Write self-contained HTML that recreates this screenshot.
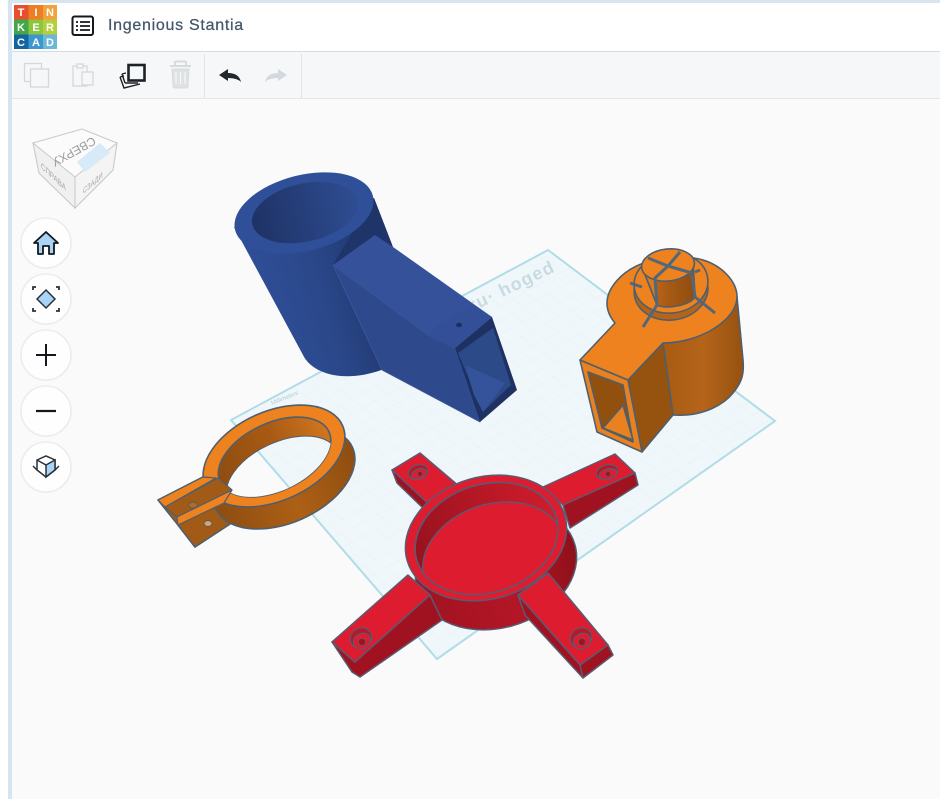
<!DOCTYPE html>
<html><head><meta charset="utf-8">
<style>
html,body{margin:0;padding:0;background:#fafafa}
#w{position:relative;width:940px;height:799px;overflow:hidden;background:#fafafa;font-family:"Liberation Sans",sans-serif}
svg{position:absolute;left:0;top:0}
#t{position:absolute;left:108px;top:17px;font-size:16px;letter-spacing:.72px;color:#44566a;white-space:nowrap;-webkit-text-stroke:.25px #44566a}
</style></head><body><div id="w">
<svg width="940" height="799" viewBox="0 0 940 799" xmlns="http://www.w3.org/2000/svg" font-family="Liberation Sans, sans-serif">
<defs>
<linearGradient id="bb" gradientUnits="userSpaceOnUse" x1="240" x2="385" y1="300" y2="260"><stop offset="0" stop-color="#31509b"/><stop offset=".55" stop-color="#2a4789"/><stop offset="1" stop-color="#1f3468"/></linearGradient>
<linearGradient id="bi" x1="0" x2="1" y1="0" y2="0"><stop offset="0" stop-color="#1e3265"/><stop offset="1" stop-color="#2f4d92"/></linearGradient>
<linearGradient id="ob" x1="0" x2="1" y1="0" y2="0"><stop offset="0" stop-color="#a85b12"/><stop offset=".5" stop-color="#b5641a"/><stop offset="1" stop-color="#96520f"/></linearGradient>
<linearGradient id="oc" x1="0" x2="1" y1="0" y2="0"><stop offset="0" stop-color="#c96f18"/><stop offset=".5" stop-color="#a85a14"/><stop offset="1" stop-color="#8e4d10"/></linearGradient>
<linearGradient id="oi" x1="0" x2="1" y1="0" y2="0"><stop offset="0" stop-color="#8e4d10"/><stop offset=".55" stop-color="#a85a14"/><stop offset="1" stop-color="#d0761f"/></linearGradient>
<linearGradient id="rs" x1="0" x2="1" y1="0" y2="0"><stop offset="0" stop-color="#8e4d10"/><stop offset=".5" stop-color="#ad6016"/><stop offset="1" stop-color="#8e4d10"/></linearGradient>
<linearGradient id="rb" x1="0" x2="1" y1="0" y2="0"><stop offset="0" stop-color="#a01320"/><stop offset=".55" stop-color="#b41626"/><stop offset="1" stop-color="#8e1019"/></linearGradient>
<linearGradient id="ri" x1="0" x2="1" y1="0" y2="0"><stop offset="0" stop-color="#98121e"/><stop offset="1" stop-color="#cf1c2c"/></linearGradient>
<pattern id="g" width="14" height="14" patternUnits="userSpaceOnUse" patternTransform="matrix(.88 -.47 .8 .6 231 420)"><path d="M0 0H14M0 0V14" stroke="#e2edf1" stroke-width=".6" fill="none"/></pattern>
<clipPath id="ci"><ellipse cx="274.5" cy="457" rx="60" ry="34" transform="rotate(-25 274.5 457)"/></clipPath>
<clipPath id="cf"><ellipse cx="486.5" cy="538.5" rx="73" ry="54" transform="rotate(-18 486.5 538.5)"/></clipPath>
<mask id="mh" maskUnits="userSpaceOnUse" x="0" y="0" width="940" height="799"><rect width="940" height="799" fill="#fff"/><g clip-path="url(#ci)"><ellipse cx="282.5" cy="476" rx="60" ry="34" transform="rotate(-25 282.5 476)" fill="#000"/></g></mask>
</defs>

<!-- chrome -->
<rect width="940" height="799" fill="#fafafa"/>
<rect x="0" y="0" width="8" height="799" fill="#fff"/>
<rect x="8" y="0" width="932" height="3" fill="#d9e5ee"/>
<rect x="8" y="0" width="4" height="799" fill="#d6e4f0"/>
<rect x="12" y="3" width="928" height="48" fill="#fff"/>
<rect x="12" y="51" width="928" height="1" fill="#d8dadc"/>
<rect x="12" y="52" width="928" height="46" fill="#f6f7f8"/>
<rect x="12" y="98" width="928" height="1" fill="#e4e5e7"/>
<rect x="204" y="54" width="1" height="44" fill="#e1e3e5"/>
<rect x="301" y="54" width="1" height="44" fill="#e1e3e5"/>

<!-- logo -->
<g font-size="11" font-weight="bold" fill="#fff" text-anchor="middle">
<rect x="14" y="5" width="14.5" height="14.5" fill="#e8502d"/><text x="21" y="16">T</text>
<rect x="28.5" y="5" width="14.5" height="14.5" fill="#ef7d23"/><text x="36" y="16">I</text>
<rect x="43" y="5" width="14" height="14.5" fill="#f2a23a"/><text x="50" y="16">N</text>
<rect x="14" y="19.5" width="14.5" height="15" fill="#43a648"/><text x="21" y="31">K</text>
<rect x="28.5" y="19.5" width="14.5" height="15" fill="#8cc63f"/><text x="36" y="31">E</text>
<rect x="43" y="19.5" width="14" height="15" fill="#b3cf3c"/><text x="50" y="31">R</text>
<rect x="14" y="34.5" width="14.5" height="14.5" fill="#14659f"/><text x="21" y="46">C</text>
<rect x="28.5" y="34.5" width="14.5" height="14.5" fill="#3c97cf"/><text x="36" y="46">A</text>
<rect x="43" y="34.5" width="14" height="14.5" fill="#6db7d6"/><text x="50" y="46">D</text>
</g>
<!-- list icon -->
<rect x="72.5" y="16.5" width="20.5" height="18.5" rx="2" fill="#fff" stroke="#15191d" stroke-width="2"/>
<path d="M76 22h2M80 22h10M76 26h2M80 26h10M76 30h2M80 30h10" stroke="#15191d" stroke-width="1.8"/>

<!-- toolbar icons -->
<g fill="none" stroke="#d5d8db" stroke-width="1.3">
<rect x="24.5" y="63.5" width="17" height="18"/><rect x="30.5" y="69" width="18" height="18" fill="#f6f7f8"/>
<rect x="73" y="66" width="14" height="20"/><rect x="77" y="64" width="6" height="4" fill="#f6f7f8"/><rect x="82" y="72" width="11" height="13" fill="#f6f7f8"/>
</g>
<path d="M170 66h21M175 65v-2.500q0-1 1-1h9q1 0 1 1v2.500" fill="none" stroke="#d8dbde" stroke-width="2"/>
<path d="M172 69h17l-1 17q0 2-2 2h-11q-2 0-2-2z" fill="#dfe2e5" stroke="#d8dbde" stroke-width="1"/>
<path d="M176 72v12M180.500 72v12M185 72v12" stroke="#f6f7f8" stroke-width="1.200"/>
<g fill="none" stroke="#1c2126" stroke-width="1.400">
<path d="M120 77l4-1M120 77l4 11 16-4"/><path d="M122 74l4-1M122 74l3 9M125 83l13 0"/>
<rect x="128.500" y="65" width="16" height="15.500" stroke-width="2.600" fill="#f6f7f8"/>
</g>
<path d="M219 75l9-6v4q11 0 13 9q-4-4-13-4v3z" fill="#20272d"/>
<path d="M287 75l-9-6v4q-11 0-13 9q4-4 13-4v3z" fill="#d3d9df"/>

<!-- view cube -->
<path d="M82 129L117 143L113 170L75 208L39 173L33 143Z" fill="#fbfbfb" stroke="#c8c9ca"/>
<path d="M39 173L75 208L75 177L33 143Z" fill="#f0f0f0" stroke="#c8c9ca"/>
<path d="M75 177L117 143L113 170L75 208Z" fill="#f4f4f4" stroke="#c8c9ca"/>
<path d="M77 162L100 143L110 153L85 172Z" fill="#d6eaf7"/>
<text transform="translate(72 148) rotate(151)" text-anchor="middle" font-size="12" fill="#999b9d">СВЕРХУ</text>
<text transform="matrix(.73 .68 0 1 41 168)" font-size="8.500" fill="#a4a6a8">СПРАВА</text>
<text transform="matrix(.72 -.62 0 1 83 194)" font-size="8" fill="#a4a6a8">СЗАДИ</text>

<!-- round buttons -->
<g fill="#fefefe" stroke="#ececec" stroke-width="1.6">
<circle cx="46" cy="243" r="25"/><circle cx="46" cy="299" r="25"/><circle cx="46" cy="355" r="25"/><circle cx="46" cy="411" r="25"/><circle cx="46" cy="467" r="25"/>
</g>
<path d="M34 243L46 232L58 243H54V254H49V246H43V254H38V243Z" fill="#a9d4f5" stroke="#14181c" stroke-width="1.800" stroke-linejoin="round"/>
<path d="M46 290L55 299L46 308L37 299Z" fill="#a9d4f5" stroke="#2a3138" stroke-width="1.500"/>
<path d="M33 290v-3h3M56 287h3v3M33 308v3h3M56 311h3v-3" fill="none" stroke="#2a3138" stroke-width="1.800"/>
<path d="M36 355H56M46 344V366" stroke="#14181c" stroke-width="2" fill="none"/>
<path d="M36 411H56" stroke="#14181c" stroke-width="2.200"/>
<path d="M37 460L46 456L55 460V470L46 477L37 470Z" fill="#fff" stroke="#2a3138" stroke-width="1.500"/>
<path d="M46 465L55 460V470L46 477Z" fill="#a9d4f5" stroke="#2a3138" stroke-width="1.500"/>
<path d="M37 460L46 465M33 466l4 4M59 466l-4 4" stroke="#2a3138" stroke-width="1.500" fill="none"/>

<!-- workplane -->
<path d="M231 420L548 250L775 421L437 659Z" fill="#f0f7fa"/>
<path d="M231 420L548 250L775 421L437 659Z" fill="url(#g)"/>
<path d="M231 420L548 250L775 421L437 659Z" fill="none" stroke="#b0dce8" stroke-width="2"/>
<text transform="translate(472 312) rotate(-26)" font-size="18" font-weight="bold" fill="#c8dbe2" letter-spacing="1.200">ru· hoged</text>
<text transform="translate(272 405) rotate(-22)" font-size="6" fill="#b7cad1">Millimeters</text>

<!-- blue part -->
<g stroke-linejoin="round">
<path d="M234 227L303 355C312 374 345 384 384 369L394 250L374 198Z" fill="url(#bb)"/>
<path d="M374 198L393 247L375 235L333 265L345 245Z" fill="#1f3468"/>
<path d="M333 265L382 370L480 422L455 348L428 335Z" fill="#2e4a8c" stroke="#3b5a9e" stroke-width=".8"/>
<path d="M333 265L375 235L393 247L492 317L455 348L428 335Z" fill="#34519a"/>
<path d="M438 325L472 305L492 317L455 348L428 335Z" fill="#324f97"/>
<path d="M455 348L492 317L517 390L480 422Z" fill="#1d3163"/>
<path d="M458 353L493 328L511 385L483 412Z" fill="#2c4988"/>
<path d="M465 365L505 383L483 412L474 395Z" fill="#34539a"/>
<ellipse cx="304" cy="213" rx="71" ry="38" transform="rotate(-14 304 213)" fill="#2f4f98"/>
<ellipse cx="305" cy="212.500" rx="54" ry="29" transform="rotate(-13 305 212.500)" fill="url(#bi)"/>
<ellipse cx="459" cy="325" rx="3" ry="2.200" fill="#1d2f5c"/>
</g>

<!-- orange part -->
<g stroke="#4f5f6e" stroke-width="1.600" stroke-linejoin="round">
<path d="M663 343L673 415C705 417 725 403 733 393C743 381 744 372 743 360L737 297Z" fill="url(#ob)"/>
<path d="M628 380L663 343L673 415L642 452Z" fill="#96520f"/>
<path d="M580 360L628 380L642 452L597 432Z" fill="#e9811f"/>
<path d="M588 372L623 385L633 442L602 428Z" fill="#92500f"/>
<path d="M623 405L633 440L603 428Z" fill="#e9811f"/>
<path d="M615 323C609 316 607 310 607 303C607 290 620 270 647 262C665 256 690 256 703 260C720 265 737 280 737 297C737 320 700 343 663 343L628 380L580 360Z" fill="#ed821e"/>
<ellipse cx="671" cy="290" rx="37" ry="30" transform="rotate(-8 671 290)" fill="#b5641a"/>
<ellipse cx="671" cy="283" rx="37" ry="30" transform="rotate(-8 671 283)" fill="#ed821e"/>
<path d="M642 267L657 305C665 310 695 305 695 295L693 262Z" fill="url(#oc)"/>
<path d="M642 267L655 278L657 305Z" fill="#d97a1c"/>
<ellipse cx="668" cy="265" rx="26.500" ry="16" transform="rotate(-6 668 265)" fill="#ed821e"/>
</g>
<g stroke="#53677a" stroke-width="3" fill="none" stroke-linejoin="round">
<path d="M648 258L668 266L692 273M680 252L668 266L655 278L657 305L643 327M692 275L695 297L715 313M630 283L642 287M695 272L700 270"/>
</g>

<!-- orange ring -->
<g stroke="#4f5f6e" stroke-width="1.600" stroke-linejoin="round">
<path d="M158 500L203 477L240 500L233 522L195 547L178 525Z" fill="#a25b17"/>
<path d="M178 525L222 503L233 522L195 547Z" fill="#a25b17"/>
</g>
<g mask="url(#mh)" stroke="#4f5f6e" stroke-width="1.600">
<ellipse cx="284" cy="478" rx="75" ry="44.700" transform="rotate(-24 284 478)" fill="url(#rs)"/>
<ellipse cx="274" cy="456" rx="75" ry="44.700" transform="rotate(-24 274 456)" fill="#ed821e"/>
<ellipse cx="274.500" cy="457" rx="60" ry="34" transform="rotate(-25 274.500 457)" fill="url(#oi)"/>
</g>
<g clip-path="url(#ci)"><ellipse cx="282.500" cy="476" rx="60" ry="34" transform="rotate(-25 282.500 476)" fill="none" stroke="#4f5f6e" stroke-width="1"/></g>
<path d="M158 500L203 477L216 478L165 507Z" fill="#ed821e" stroke="#4f5f6e" stroke-width="1.200" stroke-linejoin="round"/>
<path d="M165 507L218 478L232 490L177 517Z" fill="#a25b17" stroke="#4f5f6e" stroke-width="1.200" stroke-linejoin="round"/>
<path d="M177 517L232 490L224 503L178 525Z" fill="#ed821e" stroke="#4f5f6e" stroke-width="1.200" stroke-linejoin="round"/>
<ellipse cx="193" cy="505" rx="4.500" ry="3" fill="#b36a25" stroke="#5a5a55"/>
<ellipse cx="208" cy="523.500" rx="4" ry="3" fill="#d9a070" stroke="#5a5a55"/>

<!-- red part -->
<g stroke="#5a5a72" stroke-width="1.500" stroke-linejoin="round">
<ellipse cx="496" cy="567" rx="82" ry="61" transform="rotate(-16 496 567)" fill="url(#rb)"/>
<path d="M392 470L397 483L425 510L432 507Z" fill="#9c1220"/>
<path d="M392 470L420 453L460 487L432 507Z" fill="#de1c2f"/>
<path d="M638 485L570 528L563 505L635 473Z" fill="#a01220"/>
<path d="M543 487L615 454L635 473L563 505Z" fill="#de1c2f"/>
<path d="M332 642L355 662L430 595L442 620L360 677L352 672Z" fill="#a01220"/>
<path d="M332 642L408 575L430 595L355 662Z" fill="#de1c2f"/>
<path d="M518 595L525 615L583 678L580 665Z" fill="#a01220"/>
<path d="M580 665L608 645L613 655L583 678Z" fill="#a01220"/>
<path d="M548 573L608 645L580 665L518 595Z" fill="#de1c2f"/>
<ellipse cx="486" cy="538" rx="82" ry="61" transform="rotate(-16 486 538)" fill="#de1c2f"/>
<ellipse cx="486.500" cy="538.500" rx="73" ry="54" transform="rotate(-18 486.500 538.500)" fill="url(#ri)"/>
</g>
<g clip-path="url(#cf)"><ellipse cx="494" cy="558" rx="73" ry="54" transform="rotate(-18 494 558)" fill="#de1c2f" stroke="#5a5a72" stroke-width="1.400"/></g>
<ellipse cx="486.500" cy="538.500" rx="73" ry="54" transform="rotate(-18 486.500 538.500)" fill="none" stroke="#5a5a72" stroke-width="1.400"/>
<g stroke="#5a5a72" stroke-width="1.200">
<ellipse cx="418" cy="472" rx="10" ry="7" transform="rotate(-20 418 472)" fill="#b81726"/><ellipse cx="607" cy="472" rx="11" ry="7" transform="rotate(-15 607 472)" fill="#b81726"/>
<ellipse cx="361" cy="638" rx="11" ry="10" transform="rotate(-30 361 638)" fill="#b81726"/><ellipse cx="581" cy="638" rx="11" ry="10" transform="rotate(-30 581 638)" fill="#b81726"/>
<ellipse cx="419" cy="474" rx="8" ry="5" transform="rotate(-20 419 474)" fill="#de1c2f"/><ellipse cx="608" cy="474" rx="9" ry="5" transform="rotate(-15 608 474)" fill="#de1c2f"/>
<ellipse cx="362" cy="641" rx="9" ry="7.500" transform="rotate(-30 362 641)" fill="#de1c2f"/><ellipse cx="582" cy="641" rx="9" ry="7.500" transform="rotate(-30 582 641)" fill="#de1c2f"/>
</g>
<g fill="#a01220" stroke="#5a5a72" stroke-width=".8">
<circle cx="420" cy="474" r="2.500"/><circle cx="608" cy="474" r="2.500"/><circle cx="362" cy="642" r="3.500"/><circle cx="582" cy="642" r="3.500"/>
</g>
</svg>
<div id="t">Ingenious Stantia</div>
</div></body></html>
